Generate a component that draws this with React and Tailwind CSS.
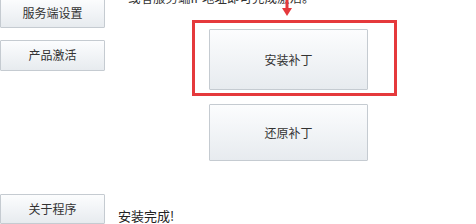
import React from "react";

const font = { fontFamily: '"Noto Sans CJK SC", "Noto Sans", sans-serif' };

function Btn({ className = "", children }) {
  return (
    <div
      className={
        "flex items-center justify-center border border-[#c5cbd1] bg-gradient-to-b from-[#fcfdfe] to-[#e7ebef] text-[12px] text-[#333] rounded-[1px] " +
        className
      }
    >
      {children}
    </div>
  );
}

export default function App() {
  return (
    <div
      className="relative w-[476px] h-[224px] overflow-hidden bg-white flex"
      style={font}
    >
      <div className="flex flex-col w-[105px] shrink-0">
        <Btn className="mt-[-2px] h-[31px] w-[105px]">服务端设置</Btn>
        <Btn className="mt-[12px] h-[31px] w-[105px]">产品激活</Btn>
        <Btn className="mt-[123px] h-[31px] w-[105px]">关于程序</Btn>
      </div>
      <div className="flex flex-col flex-1">
        <div className="mt-[-10px] ml-[23px] h-[16px] leading-[16px] text-[12.5px] text-[#333] whitespace-nowrap">
          或者服务端IP地址即可完成激活。
        </div>
        <div className="mt-[14px] ml-[87px] w-[205px] h-[80px] border-[3px] border-[#e5393c] pl-[14px] pt-[6px]">
          <Btn className="w-[159px] h-[61px]">安装补丁</Btn>
        </div>
        <Btn className="mt-[8px] ml-[104px] w-[159px] h-[60px]">还原补丁</Btn>
        <div className="mt-[47px] ml-[13px] text-[13px] leading-[16px] text-[#222] whitespace-nowrap">
          安装完成!
        </div>
      </div>
      <svg
        className="absolute left-[281px] top-0"
        width="12"
        height="18"
        viewBox="0 0 12 18"
      >
        <rect x="4.5" y="0" width="3" height="9" fill="#e5393c" />
        <polygon points="1,8 11,8 6,16" fill="#e5393c" />
      </svg>
    </div>
  );
}
